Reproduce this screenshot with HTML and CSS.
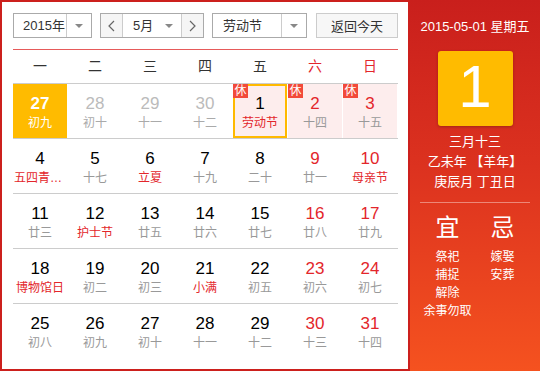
FILE: index.html
```html
<!DOCTYPE html>
<html lang="zh-CN">
<head>
    <meta charset="UTF-8">
    <meta name="viewport" content="width=device-width, initial-scale=1.0">
    <title>万年历</title>
    <link rel="stylesheet" href="styles.css">
</head>
<body>
    <div class="calendar">
        <div class="main">
            <!-- 顶部选择栏 -->
            <div class="toolbar">
                <div class="select year">
                    <span class="value">2015年</span>
                    <span class="arrow"></span>
                </div>
                <div class="select month">
                    <span class="step">
                        <svg width="7" height="12" viewBox="0 0 7 12"><polyline points="6,1 1,6 6,11" fill="none" stroke="#666" stroke-width="1.2"/></svg>
                    </span>
                    <span class="value">5月<i class="tri"></i></span>
                    <span class="step next">
                        <svg width="7" height="12" viewBox="0 0 7 12"><polyline points="1,1 6,6 1,11" fill="none" stroke="#666" stroke-width="1.2"/></svg>
                    </span>
                </div>
                <div class="select holiday">
                    <span class="value">劳动节</span>
                    <span class="arrow"></span>
                </div>
                <button class="today-btn">返回今天</button>
            </div>
            <div class="rule"></div>

            <div class="weekdays">
                <span>一</span><span>二</span><span>三</span><span>四</span><span>五</span>
                <span class="weekend">六</span><span class="weekend">日</span>
            </div>

            <div class="days">
                <div class="week">
                    <div class="cell today"><div class="num">27</div><div class="lunar">初九</div></div>
                    <div class="cell other"><div class="num">28</div><div class="lunar">初十</div></div>
                    <div class="cell other"><div class="num">29</div><div class="lunar">十一</div></div>
                    <div class="cell other"><div class="num">30</div><div class="lunar">十二</div></div>
                    <div class="cell rest selected"><span class="badge">休</span><div class="num">1</div><div class="lunar fest">劳动节</div></div>
                    <div class="cell rest weekend"><span class="badge">休</span><div class="num">2</div><div class="lunar">十四</div></div>
                    <div class="cell rest weekend"><span class="badge">休</span><div class="num">3</div><div class="lunar">十五</div></div>
                </div>
                <div class="week">
                    <div class="cell"><div class="num">4</div><div class="lunar fest">五四青年节</div></div>
                    <div class="cell"><div class="num">5</div><div class="lunar">十七</div></div>
                    <div class="cell"><div class="num">6</div><div class="lunar fest">立夏</div></div>
                    <div class="cell"><div class="num">7</div><div class="lunar">十九</div></div>
                    <div class="cell"><div class="num">8</div><div class="lunar">二十</div></div>
                    <div class="cell weekend"><div class="num">9</div><div class="lunar">廿一</div></div>
                    <div class="cell weekend"><div class="num">10</div><div class="lunar fest">母亲节</div></div>
                </div>
                <div class="week">
                    <div class="cell"><div class="num">11</div><div class="lunar">廿三</div></div>
                    <div class="cell"><div class="num">12</div><div class="lunar fest">护士节</div></div>
                    <div class="cell"><div class="num">13</div><div class="lunar">廿五</div></div>
                    <div class="cell"><div class="num">14</div><div class="lunar">廿六</div></div>
                    <div class="cell"><div class="num">15</div><div class="lunar">廿七</div></div>
                    <div class="cell weekend"><div class="num">16</div><div class="lunar">廿八</div></div>
                    <div class="cell weekend"><div class="num">17</div><div class="lunar">廿九</div></div>
                </div>
                <div class="week">
                    <div class="cell"><div class="num">18</div><div class="lunar fest">博物馆日</div></div>
                    <div class="cell"><div class="num">19</div><div class="lunar">初二</div></div>
                    <div class="cell"><div class="num">20</div><div class="lunar">初三</div></div>
                    <div class="cell"><div class="num">21</div><div class="lunar fest">小满</div></div>
                    <div class="cell"><div class="num">22</div><div class="lunar">初五</div></div>
                    <div class="cell weekend"><div class="num">23</div><div class="lunar">初六</div></div>
                    <div class="cell weekend"><div class="num">24</div><div class="lunar">初七</div></div>
                </div>
                <div class="week">
                    <div class="cell"><div class="num">25</div><div class="lunar">初八</div></div>
                    <div class="cell"><div class="num">26</div><div class="lunar">初九</div></div>
                    <div class="cell"><div class="num">27</div><div class="lunar">初十</div></div>
                    <div class="cell"><div class="num">28</div><div class="lunar">十一</div></div>
                    <div class="cell"><div class="num">29</div><div class="lunar">十二</div></div>
                    <div class="cell weekend"><div class="num">30</div><div class="lunar">十三</div></div>
                    <div class="cell weekend"><div class="num">31</div><div class="lunar">十四</div></div>
                </div>
            </div>
        </div>

        <!-- 右侧详情 -->
        <aside class="info">
            <div class="date">2015-05-01 星期五</div>
            <div class="big-day">1</div>
            <div class="lunar-info">
                <p>三月十三</p>
                <p>乙未年 【羊年】</p>
                <p>庚辰月 丁丑日</p>
            </div>
            <div class="divider"></div>
            <div class="yiji">
                <div>
                    <h3>宜</h3>
                    <ul>
                        <li>祭祀</li>
                        <li>捕捉</li>
                        <li>解除</li>
                        <li>余事勿取</li>
                    </ul>
                </div>
                <div>
                    <h3>忌</h3>
                    <ul>
                        <li>嫁娶</li>
                        <li>安葬</li>
                    </ul>
                </div>
            </div>
        </aside>
    </div>
</body>
</html>
```

FILE: styles.css
```css
body {
    margin: 0;
    font-family: "Liberation Sans", "Noto Sans CJK SC", sans-serif;
    background: #fff;
}
.calendar {
    display: flex;
    width: 540px;
    height: 371px;
}
.main {
    width: 410px;
    box-sizing: border-box;
    border: 2px solid #cc201d;
    padding: 11px 10px 0 11px;
    background: #fff;
}
/* 选择栏 */
.toolbar {
    display: flex;
    gap: 8px;
    height: 25px;
}
.select {
    display: flex;
    box-sizing: border-box;
    height: 25px;
    border: 1px solid #aaa;
    font-size: 13px;
    color: #333;
    background: #fff;
}
.select .value {
    flex: 1;
    line-height: 23px;
    padding-left: 10px;
    position: relative;
}
.year .value {
    padding-left: 9px;
}
.select .arrow {
    width: 24px;
    border-left: 1px solid #ccc;
    display: flex;
    align-items: center;
    justify-content: center;
}
.select .arrow::after,
.tri {
    content: "";
    width: 0;
    height: 0;
    border-left: 4px solid transparent;
    border-right: 4px solid transparent;
    border-top: 4px solid #888;
}
.year {
    width: 79px;
}
.month {
    width: 104px;
}
.month .step {
    width: 21px;
    background: #f5f5f5;
    border-right: 1px solid #ccc;
    display: flex;
    align-items: center;
    justify-content: center;
}
.month .step.next {
    border-right: none;
    border-left: 1px solid #ccc;
}
.month .tri {
    position: absolute;
    right: 8px;
    top: 10px;
}
.holiday {
    width: 95px;
}
.today-btn {
    margin-left: auto;
    width: 82px;
    height: 25px;
    border: 1px solid #ccc;
    background: #f7f7f7;
    font-family: inherit;
    font-size: 13px;
    color: #333;
    padding: 0;
}
.rule {
    margin-top: 11px;
    height: 1px;
    background: #e65a5a;
}
/* 星期 */
.weekdays {
    display: grid;
    grid-template-columns: repeat(7, 54px);
    column-gap: 1px;
    height: 33px;
    line-height: 33px;
    text-align: center;
    font-size: 14px;
    color: #333;
    border-bottom: 1px solid #ccc;
}
.weekdays .weekend {
    color: #e3262b;
}
/* 日期格子 */
.week {
    display: grid;
    grid-template-columns: repeat(7, 54px);
    column-gap: 1px;
    border-bottom: 1px solid #ccc;
}
.week:last-child {
    border-bottom: none;
}
.cell {
    position: relative;
    height: 54px;
    box-sizing: border-box;
    padding-top: 10px;
    text-align: center;
}
.num {
    font-size: 17px;
    line-height: 20px;
    color: #000;
}
.lunar {
    margin-top: 1px;
    padding: 0 1px;
    font-size: 12px;
    line-height: 16px;
    color: #999;
    white-space: nowrap;
    overflow: hidden;
    text-overflow: ellipsis;
}
.weekend .num {
    color: #e3262b;
}
.lunar.fest {
    color: #e3262b;
}
.other .num {
    color: #bbb;
}
.other .lunar {
    color: #aaa;
}
.today {
    background: #ffbb00;
}
.today .num {
    color: #fff;
    font-weight: bold;
}
.today .lunar {
    color: #fff;
}
.rest {
    background: #fdeded;
}
.selected {
    border: 2px solid #ffb900;
    padding-top: 8px;
}
.badge {
    position: absolute;
    top: 0;
    left: 0;
    width: 15px;
    height: 14px;
    line-height: 14px;
    font-size: 12px;
    color: #fff;
    background: #f24a3a;
}
.selected .badge {
    top: -2px;
    left: -2px;
}
/* 右侧 */
.info {
    width: 130px;
    padding-top: 17px;
    box-sizing: border-box;
    background: linear-gradient(180deg, #c91f1c 0%, #dc321f 45%, #f5521f 100%);
    color: #fff;
    text-align: center;
}
.date {
    font-size: 13px;
    line-height: 20px;
}
.big-day {
    width: 75px;
    height: 75px;
    margin: 14px auto 0;
    background: #ffbb00;
    border-radius: 3px;
    box-shadow: 0 1px 3px rgba(0, 0, 0, 0.25);
    font-size: 60px;
    line-height: 71px;
}
.lunar-info {
    margin-top: 6px;
    font-size: 13px;
    line-height: 20px;
}
.lunar-info p {
    margin: 0;
}
.divider {
    width: 110px;
    height: 1px;
    margin: 10px auto 0;
    background: rgba(255, 255, 255, 0.4);
}
.yiji {
    display: grid;
    grid-template-columns: 55px 55px;
    width: 110px;
    margin: 10px auto 0;
}
.yiji h3 {
    margin: 0;
    font-size: 24px;
    font-weight: normal;
    line-height: 30px;
}
.yiji ul {
    list-style: none;
    margin: 5px 0 0;
    padding: 0;
    font-size: 12px;
    line-height: 18px;
    white-space: nowrap;
}
```
